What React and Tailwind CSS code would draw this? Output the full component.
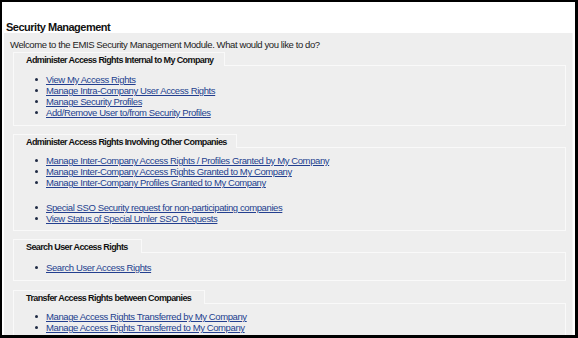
import React from "react";

const font = { fontFamily: '"Liberation Sans", Arial, sans-serif' };

function Bullet({ children }) {
  return (
    <li className="flex items-center h-[11px] leading-[11px] whitespace-nowrap">
      <span className="w-[11px] flex justify-center">
        <span className="block w-[3px] h-[3px] rounded-full bg-[#1f2a44]" />
      </span>
      <a href="#" className="ml-[4px] text-[#233f8f] underline decoration-[#233f8f] underline-offset-[1px]">
        {children}
      </a>
    </li>
  );
}

function Group({ title, tabW, mt, children, pt, pb }) {
  return (
    <div className={mt}>
      <div className="flex items-end">
        <div
          className={`${tabW} h-[14px] pl-[12px] border-t border-l border-r border-[#f9f9f9] font-bold text-[9px] leading-[14px] text-[#111] tracking-[-0.6px] whitespace-nowrap`}
        >
          {title}
        </div>
        <div className="flex-1 border-b border-r border-[#f9f9f9] h-[1px]" />
      </div>
      <div className={`border-l border-r border-b border-[#f9f9f9] ${pt} ${pb} pl-[17px]`}>
        {children}
      </div>
    </div>
  );
}

const listCls = "text-[9.5px] tracking-[-0.4px]";

export default function App() {
  return (
    <div
      style={font}
      className="w-[578px] h-[338px] overflow-hidden bg-white border-t-2 border-l-2 border-r-[3px] border-b-[3px] border-black"
    >
      <div className="pl-[4px] pt-[19px] h-[31px] text-[11px] leading-[13px] font-bold text-[#111] tracking-[-0.5px]">
        Security Management
      </div>
      <div className="ml-[2px] mr-[2px] bg-[#eeeeee] border-r border-[#f6f6f6] pt-[6px] pl-[9px] pr-[6px] h-[400px]">
        <div className="text-[9.5px] leading-[12px] text-[#222] -ml-[3px] tracking-[-0.4px] whitespace-nowrap">
          Welcome to the EMIS Security Management Module. What would you like to do?
        </div>
        <Group title="Administer Access Rights Internal to My Company" tabW="w-[212px]" mt="mt-[1px]" pt="pt-[8px]" pb="pb-[7px]">
          <ul className={listCls}>
            <Bullet>View My Access Rights</Bullet>
            <Bullet>Manage Intra-Company User Access Rights</Bullet>
            <Bullet>Manage Security Profiles</Bullet>
            <Bullet>Add/Remove User to/from Security Profiles</Bullet>
          </ul>
        </Group>
        <Group title="Administer Access Rights Involving Other Companies" tabW="w-[224px]" mt="mt-[8px]" pt="pt-[7px]" pb="pb-[6px]">
          <ul className={listCls}>
            <Bullet>Manage Inter-Company Access Rights / Profiles Granted by My Company</Bullet>
            <Bullet>Manage Inter-Company Access Rights Granted to My Company</Bullet>
            <Bullet>Manage Inter-Company Profiles Granted to My Company</Bullet>
          </ul>
          <ul className={`${listCls} mt-[14px]`}>
            <Bullet>Special SSO Security request for non-participating companies</Bullet>
            <Bullet>View Status of Special Umler SSO Requests</Bullet>
          </ul>
        </Group>
        <Group title="Search User Access Rights" tabW="w-[129px]" mt="mt-[8px]" pt="pt-[9px]" pb="pb-[7px]">
          <ul className={listCls}>
            <Bullet>Search User Access Rights</Bullet>
          </ul>
        </Group>
        <Group title="Transfer Access Rights between Companies" tabW="w-[192px]" mt="mt-[9px]" pt="pt-[7px]" pb="pb-[7px]">
          <ul className={listCls}>
            <Bullet>Manage Access Rights Transferred by My Company</Bullet>
            <Bullet>Manage Access Rights Transferred to My Company</Bullet>
            <Bullet>Manage Inbound Access Rights</Bullet>
          </ul>
        </Group>
      </div>
    </div>
  );
}
